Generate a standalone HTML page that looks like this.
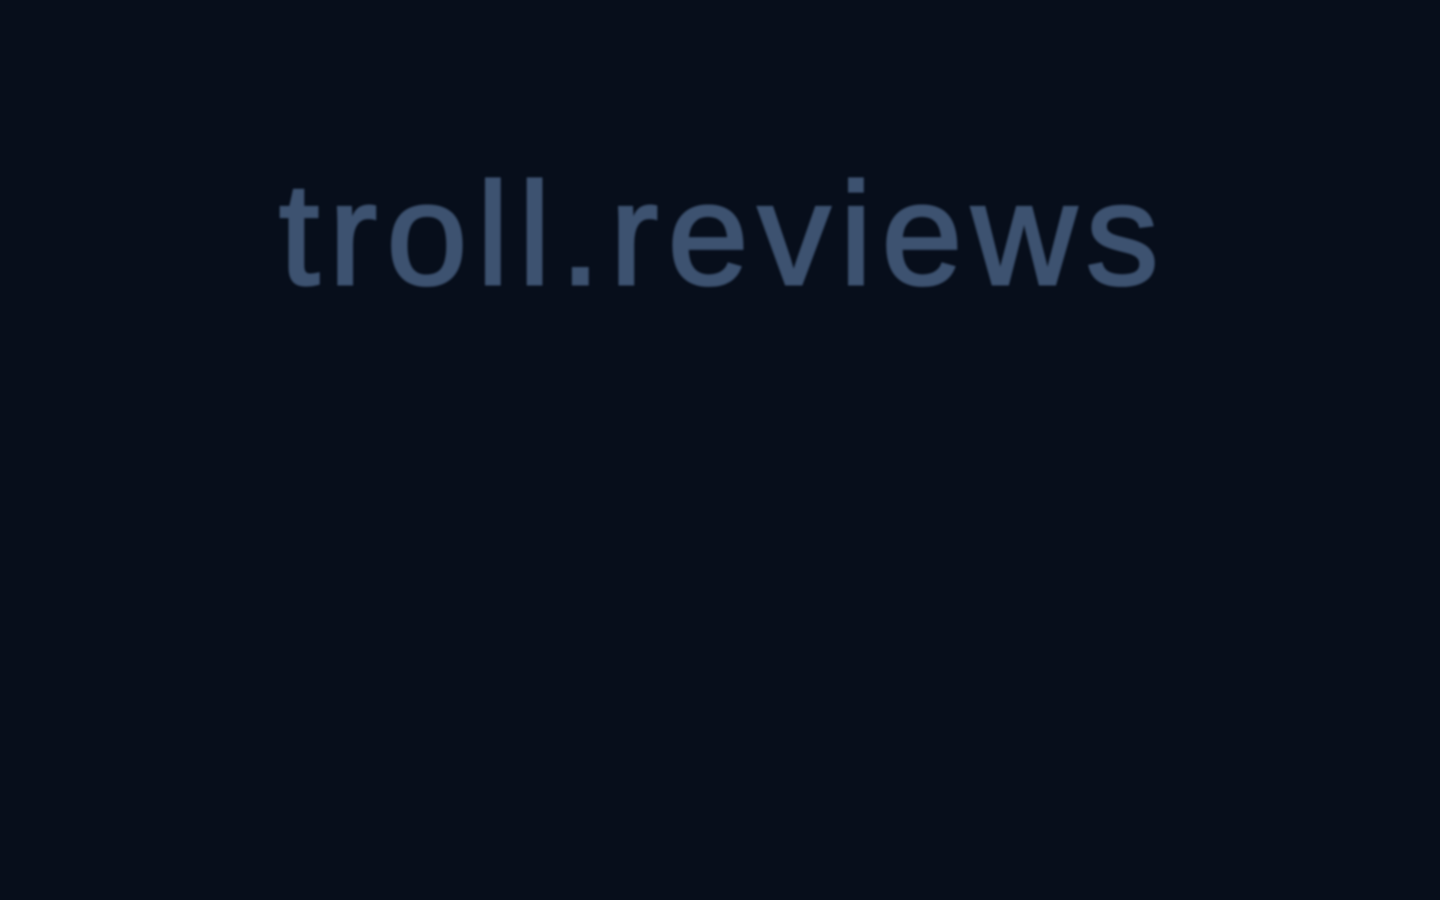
<!DOCTYPE html>
<html><head><style>
html,body{margin:0;width:1440px;height:900px;background:#070e1b;overflow:hidden}
.t{position:absolute;left:279px;top:162px;font:400 145px/1 "Liberation Sans",sans-serif;letter-spacing:9.5px;color:#3d5270;-webkit-text-stroke:3px #3d5270;filter:blur(1px);white-space:nowrap}
</style></head><body><div class="t">troll.reviews</div></body></html>
